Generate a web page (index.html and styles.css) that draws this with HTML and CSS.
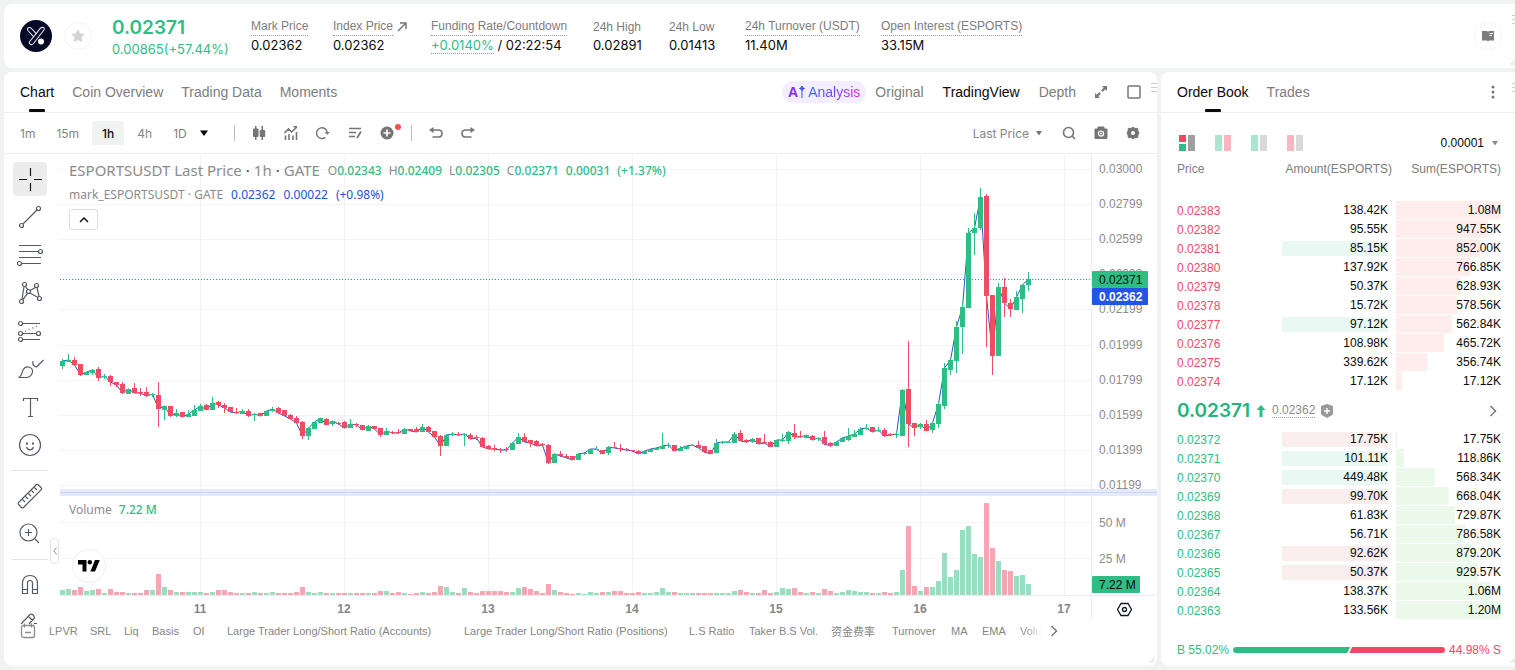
FILE: index.html
```html
<!DOCTYPE html>
<html lang="en">
<head>
<meta charset="utf-8">
<title>ESPORTSUSDT Futures</title>
<link rel="stylesheet" href="styles.css">
</head>
<body>
<header class="card ticker">
  <svg class="coin" viewBox="0 0 32 32" width="32" height="32"><circle cx="16" cy="16" r="16" fill="#050b26"/><g fill="none" stroke="#dfe3ee" stroke-width="1.1" stroke-linejoin="round"><path d="M20.5 8.2q1.200-1.200 2.800-.6t.6 2.400L13.500 23.500q-1.400 1.600-3.200.8t-.6-2.800z"/><path d="M14 17.200 7.800 10.500q-.8-1.900.5-2.700t2.700.2l5.700 6.200"/></g><circle cx="21" cy="21.500" r="3" fill="#fff"/></svg>
  <button class="round" aria-label="Favorite"><svg width="14" height="14" viewBox="0 0 14 14"><path fill="#d3d3d3" stroke="#d3d3d3" stroke-linejoin="round" d="m7 1 1.800 3.900 4.200.5-3.100 2.900.8 4.200L7 10.400l-3.700 2.100.8-4.200L1 5.400l4.200-.5z"/></svg></button>
  <div class="last"><strong>0.02371</strong><span>0.00865(+57.44%)</span></div>
  <dl class="stats">
    <div><dt><span class="hint">Mark Price</span></dt><dd>0.02362</dd></div>
    <div><dt><span class="hint">Index Price</span> <svg width="10" height="10" viewBox="0 0 10 10"><path d="M1 9 9 1M3 1h6v6" fill="none" stroke="#777" stroke-width="1.500"/></svg></dt><dd>0.02362</dd></div>
    <div><dt><span class="hint">Funding Rate/Countdown</span></dt><dd><span class="hint up">+0.0140%</span> / 02:22:54</dd></div>
    <div><dt>24h High</dt><dd>0.02891</dd></div>
    <div><dt>24h Low</dt><dd>0.01413</dd></div>
    <div><dt><span class="hint">24h Turnover (USDT)</span></dt><dd>11.40M</dd></div>
    <div><dt><span class="hint">Open Interest (ESPORTS)</span></dt><dd>33.15M</dd></div>
  </dl>
  <button class="round guide" aria-label="Guide"><svg width="14" height="12" viewBox="0 0 14 12"><path fill="#7d7d7d" d="M1 1h5l1 1 1-1h5v9.500H8l-1 1-1-1H1z"/><path d="M8.500 3.500H12M8.500 5.500H11" stroke="#fff" fill="none"/></svg></button>
  <i class="grip"></i><i class="corner"></i>
</header>

<main>
<section class="card chart-card">
  <div class="tabs">
    <nav><a class="on" href="#">Chart</a><a href="#">Coin Overview</a><a href="#">Trading Data</a><a href="#">Moments</a></nav>
    <div class="views">
      <button class="ai"><b>A<svg width="6" height="12" viewBox="0 0 6 12"><path d="M3 5v7M3 0l.8 1.700L5.500 2.500l-1.700.8L3 5l-.8-1.700L.5 2.500l1.700-.8z" fill="#4050f0" stroke="#4050f0" /></svg></b> <span>Analysis</span></button>
      <button>Original</button><button class="on">TradingView</button><button>Depth</button>
      <button aria-label="Expand"><svg width="12" height="12" viewBox="0 0 12 12"><path d="M7 0h5v5l-1.700-1.700L7.700 5.900 6.100 4.300l2.600-2.600zM5 12H0V7l1.700 1.700 2.600-2.600 1.600 1.600-2.600 2.600z" fill="#777"/></svg></button>
      <button class="box-btn" aria-label="Full screen"><svg width="14" height="14" viewBox="0 0 14 14"><rect x="1" y="1" width="12" height="12" rx="1" fill="none" stroke="#777" stroke-width="1.500"/></svg></button>
    </div>
    <i class="grip"></i>
  </div>
  <div class="tools">
    <div class="frames"><button>1m</button><button>15m</button><button class="on">1h</button><button>4h</button><button>1D</button><button class="more" aria-label="More intervals"><svg width="8" height="6" viewBox="0 0 8 6"><path d="M0 .5h8L4 6z"/></svg></button></div>
    <div class="icons">
      <button aria-label="Candles"><svg width="14" height="14" viewBox="0 0 14 14" fill="#757575"><path d="M3 0h1.500v14H3zM9.500 0H11v14H9.500z"/><rect x="1" y="2.500" width="5.500" height="8.500" rx="1"/><rect x="7.700" y="4" width="5.500" height="7" rx="1"/></svg></button>
      <button aria-label="Indicators"><svg width="14" height="14" viewBox="0 0 14 14" fill="none" stroke="#757575" stroke-width="1.600"><path d="m.5 7 4-4 3 3L13 1M9.500.8H13M1.500 9.500V14M5 8v6M9 9.500V14M12.500 6v8"/></svg></button>
      <button aria-label="Replay"><svg width="14" height="14" viewBox="0 0 15 14" fill="none" stroke="#757575" stroke-width="1.500"><path d="M10 11.700A5.800 5.800 0 1 1 12.200 7"/><path d="M9.300 6h5.500L12 9z" fill="#757575" stroke="none"/></svg></button>
      <button aria-label="Templates"><svg width="14" height="14" viewBox="0 0 14 14" fill="none" stroke="#757575" stroke-width="1.700"><path d="M1 2.500h12M1 6.500h7M1 10.500h6M13 5.500l-4 6.500"/></svg></button>
      <button class="add" aria-label="Add"><svg width="14" height="14" viewBox="0 0 14 14"><circle cx="7" cy="7" r="6.500" fill="#757575"/><path d="M7 3.500v7M3.500 7h7" stroke="#fff" stroke-width="1.700"/></svg></button>
    </div>
    <div class="icons undo">
      <button aria-label="Undo"><svg width="14" height="12" viewBox="0 0 14 12" fill="none" stroke="#757575" stroke-width="1.600"><path d="M1.500 3H10q3 .3 3 3.500T10 10H3.500"/><path d="M4.500 0v6L0 3z" fill="#757575" stroke="none"/></svg></button>
      <button aria-label="Redo"><svg width="14" height="12" viewBox="0 0 14 12" fill="none" stroke="#757575" stroke-width="1.600"><path d="M12.500 3H4Q1 3.300 1 6.500T4 10h6.500"/><path d="M9.500 0v6L14 3z" fill="#757575" stroke="none"/></svg></button>
    </div>
    <div class="icons right">
      <button class="source">Last Price <svg width="6" height="5" viewBox="0 0 6 5"><path d="M0 0h6L3 4.500z" fill="#757575"/></svg></button>
      <button aria-label="Search"><svg width="14" height="14" viewBox="0 0 14 14" fill="none" stroke="#757575" stroke-width="1.600"><circle cx="6.500" cy="6.500" r="5"/><path d="m10 10 3 3"/></svg></button>
      <button aria-label="Snapshot"><svg width="14" height="14" viewBox="0 0 14 14"><path d="M4 3V1h6v2h3v9.500H1V3z" fill="#757575" stroke="#757575" stroke-linejoin="round"/><circle cx="7" cy="7.600" r="2.600" fill="none" stroke="#fff" stroke-width="1.200"/><circle cx="7" cy="7.600" r="1" fill="#fff"/></svg></button>
      <button aria-label="Settings"><svg width="14" height="14" viewBox="0 0 14 14"><path d="m7 1 1.800 1.400 2.800 0 .4 2.800L13 7l-1 1.800-.4 2.800-2.800 0L7 13l-1.800-1.400-2.800 0L2 8.800 1 7l1-1.800.4-2.800 2.800 0z" fill="#757575" stroke="#757575" stroke-linejoin="round"/><circle cx="7" cy="7" r="2" fill="#fff"/></svg></button>
    </div>
  </div>
  <div class="stage">
    <div class="draw">
      <button class="on" aria-label="Crosshair"><svg width="28" height="28"><path d="M14.500 3v8M14.500 18v8M3 14.500h8M18 14.500h8" stroke="#131722"/></svg></button>
      <button aria-label="Trend line"><svg width="28" height="28"><circle cx="5.500" cy="22.500" r="2"/><circle cx="22.500" cy="5.500" r="2"/><path d="M7 21 21 7"/></svg></button>
      <button aria-label="Fibonacci"><svg width="28" height="28"><path d="M3 4.500h22M3 10.500h19M3 16.500h22M5 22.500h20"/><circle cx="24.500" cy="10.500" r="2"/><circle cx="3.500" cy="22.500" r="2"/></svg></button>
      <button aria-label="Patterns"><svg width="28" height="28"><circle cx="8.500" cy="5.500" r="2"/><circle cx="20.500" cy="6.500" r="2"/><circle cx="12.500" cy="12.500" r="2"/><circle cx="5.500" cy="22.500" r="2"/><circle cx="23.500" cy="19.500" r="2"/><path d="M8 7.500 6 20.500M9.500 7.500l2.300 3.200M19.500 8.500 14 11.500M21 8.500l2 9M14 14l8 4.500M11.500 14.300l-4.800 6.500"/></svg></button>
      <button aria-label="Forecast"><svg width="28" height="28"><path d="M6 6.500h18M6 16.500h15M6 22.500h18"/><path d="m9 14.500 14-6.500" stroke-dasharray="1 3"/><circle cx="4.500" cy="6.500" r="2"/><circle cx="4.500" cy="16.500" r="2"/><circle cx="22.500" cy="16.500" r="2"/><circle cx="4.500" cy="22.500" r="2"/></svg></button>
      <button aria-label="Brush"><svg width="28" height="28"><path d="M2.500 22.500q3-1 4-6.500 2-4.500 6-4 4.500 1 4 5-.800 4.500-5.500 5.500zM17 6q-1 5 3.500 6L27.500 5"/></svg></button>
      <button aria-label="Text"><svg width="28" height="28"><path d="M7.500 8V5.500h14V8M14.500 5.500v18M12 23.500h5"/></svg></button>
      <button aria-label="Emoji"><svg width="28" height="28"><circle cx="14" cy="14" r="10.500"/><path d="M10.500 16q1 2.800 3.500 2.800t3.500-2.800"/><path d="M11 11.500v2M17 11.500v2" stroke-width="2"/></svg></button>
      <hr>
      <button aria-label="Measure"><svg width="28" height="28"><path d="M2.500 20.500 20.500 2.500q1-.5 2 .5l2.500 2.500q1 1 .5 2L7.500 25.500q-1 .8-2 0l-3-3q-.8-1 0-2M6 17l3 3M9 14l3 3M12 11l3 3M15 8l3 3M18 5l3 3"/></svg></button>
      <button aria-label="Zoom in"><svg width="28" height="28"><circle cx="12.500" cy="12.500" r="8.500"/><path d="m19 19 4 4M9 12.500h7M12.500 9v7"/></svg></button>
      <hr>
      <button aria-label="Magnet"><svg width="28" height="28"><path d="M6.500 22.500V12q.5-7.500 7.500-7.500t7.500 7.500v10.500h-5V12q0-2.500-2.500-2.500T11.500 12v10.500zM6.500 18.500h5M16.500 18.500h5"/></svg></button>
      <button class="cut" aria-label="Drawing mode"><svg width="28" height="12"><path d="M5 11 14 1.500q1.500-1 3 .5t1.500 3L13 11M12.500 3.500l4 4M18 10.500h3"/></svg></button>
    </div>
    <div class="plot">
      <svg id="chart" viewBox="60 154 1097 466" role="img" aria-label="ESPORTSUSDT price and volume"></svg>
      <div class="legend">
        <p class="sym">ESPORTSUSDT Last Price <em>·</em> 1h <em>·</em> GATE <span class="ohlc"><span>O<b>0.02343</b></span><span>H<b>0.02409</b></span><span>L<b>0.02305</b></span><span>C<b>0.02371</b></span><b>0.00031</b><b>(+1.37%)</b></span></p>
        <p class="mark">mark_ESPORTSUSDT · GATE <span>0.02362</span><span>0.00022</span><span>(+0.98%)</span></p>
        <button aria-label="Collapse legend"><svg width="10" height="6" viewBox="0 0 10 6"><path d="m1 5 4-4 4 4" fill="none" stroke="#131722" stroke-width="1.500"/></svg></button>
      </div>
      <p class="vol">Volume <span>7.22 M</span></p>
      <a class="tv" href="#" aria-label="TradingView"><svg width="22" height="12" viewBox="0 0 22 12"><path d="M0 0h8.500v11.500h-4V4.500H0zM17 0h4.800L17 11.500h-4.600z"/><circle cx="11.800" cy="2.200" r="2.200"/></svg></a>
      <button class="fold" aria-label="Hide toolbar"><svg width="4" height="8" viewBox="0 0 4 8"><path d="M3.500.5.800 4l2.700 3.500" fill="none" stroke="#8a8d96"/></svg></button>
    </div>
  </div>
  <div class="indicators">
    <svg width="16" height="16" viewBox="0 0 16 16" fill="none" stroke="#8c8c8c" stroke-width="1.300"><rect x="1.500" y="2.500" width="13" height="12" rx="2"/><path d="M4.500.5v4M11.500.5v4M5 9.500h6"/></svg>
    <div class="list"><button>LPVR</button><button>SRL</button><button>Liq</button><button>Basis</button><button>OI</button><button>Large Trader Long/Short Ratio (Accounts)</button><button>Large Trader Long/Short Ratio (Positions)</button><button>L.S Ratio</button><button>Taker B.S Vol.</button><button>资金费率</button><button>Turnover</button><button>MA</button><button>EMA</button><button class="fade">Volu</button></div>
    <button aria-label="Next"><svg width="8" height="12" viewBox="0 0 8 12"><path d="m1.500 1 5 5-5 5" fill="none" stroke="#777" stroke-width="1.500"/></svg></button>
  </div>
  <i class="corner"></i>
</section>

<section class="card book">
  <div class="tabs">
    <nav><a class="on" href="#">Order Book</a><a href="#">Trades</a></nav>
    <button class="dots" aria-label="Menu"><svg width="4" height="14" viewBox="0 0 4 14" fill="#777"><circle cx="2" cy="2" r="1.500"/><circle cx="2" cy="7" r="1.500"/><circle cx="2" cy="12" r="1.500"/></svg></button>
    <i class="grip"></i>
  </div>
  <div class="modes">
    <button aria-label="Book"><svg width="16" height="16"><path fill="#f6465d" d="M0 0h7v7H0z"/><path fill="#2ebd85" d="M0 9h7v7H0z"/><path fill="#9f9f9f" d="M9 0h7v16H9z"/></svg></button>
    <button aria-label="Bids and asks"><svg width="16" height="16"><path fill="#abe5ce" d="M0 0h7v16H0z"/><path fill="#fbb5c1" d="M9 0h7v16H9z"/></svg></button>
    <button aria-label="Bids"><svg width="16" height="16"><path fill="#abe5ce" d="M0 0h7v16H0z"/><path fill="#d9d9d9" d="M9 0h7v16H9z"/></svg></button>
    <button aria-label="Asks"><svg width="16" height="16"><path fill="#fbb5c1" d="M0 0h7v16H0z"/><path fill="#d9d9d9" d="M9 0h7v16H9z"/></svg></button>
    <button class="step">0.00001 <svg width="6" height="5" viewBox="0 0 6 5"><path d="M0 0h6L3 4.500z" fill="#8a8a8a"/></svg></button>
  </div>
  <table class="asks">
    <thead><tr><th>Price</th><th>Amount(ESPORTS)</th><th>Sum(ESPORTS)</th></tr></thead>
    <tbody>
    <tr><td>0.02383</td><td><span>138.42K</span></td><td><span style="--w:100%">1.08M</span></td></tr>
    <tr><td>0.02382</td><td><span>95.55K</span></td><td><span style="--w:88%">947.55K</span></td></tr>
    <tr><td>0.02381</td><td><span class="buy">85.15K</span></td><td><span style="--w:80%">852.00K</span></td></tr>
    <tr><td>0.02380</td><td><span>137.92K</span></td><td><span style="--w:71%">766.85K</span></td></tr>
    <tr><td>0.02379</td><td><span>50.37K</span></td><td><span style="--w:61%">628.93K</span></td></tr>
    <tr><td>0.02378</td><td><span>15.72K</span></td><td><span style="--w:58%">578.56K</span></td></tr>
    <tr><td>0.02377</td><td><span class="buy">97.12K</span></td><td><span style="--w:53%">562.84K</span></td></tr>
    <tr><td>0.02376</td><td><span>108.98K</span></td><td><span style="--w:46%">465.72K</span></td></tr>
    <tr><td>0.02375</td><td><span>339.62K</span></td><td><span style="--w:30%">356.74K</span></td></tr>
    <tr><td>0.02374</td><td><span>17.12K</span></td><td><span style="--w:6%">17.12K</span></td></tr>
    </tbody>
  </table>
  <div class="mid">
    <strong>0.02371</strong>
    <svg width="10" height="12" viewBox="0 0 10 12"><path d="M5 0 9.500 5H6.500v7h-3V5H.5z" fill="#2ebd85"/></svg>
    <span class="hint">0.02362</span>
    <svg width="12" height="14" viewBox="0 0 12 14"><path d="M6 .5 11.500 2.300v8L6 13.500.5 10.300v-8z" fill="#999" stroke="#999" stroke-linejoin="round"/><path d="M6 4v6M3 7h6" stroke="#fff" stroke-width="1.500"/></svg>
    <button aria-label="More"><svg width="8" height="12" viewBox="0 0 8 12"><path d="m1.500 1 5 5-5 5" fill="none" stroke="#777" stroke-width="1.500"/></svg></button>
  </div>
  <table class="bids">
    <tbody>
    <tr><td>0.02372</td><td><span class="sell">17.75K</span></td><td><span style="--w:1%">17.75K</span></td></tr>
    <tr><td>0.02371</td><td><span class="buy">101.11K</span></td><td><span style="--w:8%">118.86K</span></td></tr>
    <tr><td>0.02370</td><td><span class="buy">449.48K</span></td><td><span style="--w:37%">568.34K</span></td></tr>
    <tr><td>0.02369</td><td><span class="sell">99.70K</span></td><td><span style="--w:50%">668.04K</span></td></tr>
    <tr><td>0.02368</td><td><span>61.83K</span></td><td><span style="--w:56%">729.87K</span></td></tr>
    <tr><td>0.02367</td><td><span>56.71K</span></td><td><span style="--w:66%">786.58K</span></td></tr>
    <tr><td>0.02366</td><td><span class="sell">92.62K</span></td><td><span style="--w:73%">879.20K</span></td></tr>
    <tr><td>0.02365</td><td><span class="sell">50.37K</span></td><td><span style="--w:78%">929.57K</span></td></tr>
    <tr><td>0.02364</td><td><span>138.37K</span></td><td><span style="--w:90%">1.06M</span></td></tr>
    <tr><td>0.02363</td><td><span>133.56K</span></td><td><span style="--w:100%">1.20M</span></td></tr>
    </tbody>
  </table>
  <div class="ratio"><span class="up">B 55.02%</span><i class="buys" style="flex-grow:55.02"></i><i class="sells" style="flex-grow:44.98"></i><span class="down">44.98% S</span></div>
  <i class="corner"></i>
</section>
</main>
<script src="chart.js"></script>
</body>
</html>
```
FILE: styles.css
```css
* { box-sizing: border-box; }
body { margin: 0; padding: 4px 0 4px 4px; min-height: 100vh; display: flex; flex-direction: column; gap: 4px; background: #f1f2f2; color: #0a0a0a; font-family: Inter, "Noto Sans CJK SC", sans-serif; font-size: 13px; overflow-x: hidden; }
button { border: 0; padding: 0; background: none; font: inherit; color: inherit; display: inline-flex; align-items: center; justify-content: center; }
a { color: inherit; text-decoration: none; }
p, dl, dd { margin: 0; }
svg { display: block; flex: none; }
.card { position: relative; background: #fff; border-radius: 8px; }
.up { color: #2ebd85; }
.down { color: #f04866; }
.hint { border-bottom: 1px dotted #999; }
.grip { position: absolute; right: 0; top: 11px; width: 6px; height: 9px; background: repeating-linear-gradient(#ccc 0 1px, transparent 1px 4px); }
.corner { position: absolute; right: 3px; bottom: 3px; border: 3px solid; border-color: transparent #eee #eee transparent; }

.ticker { display: flex; align-items: center; height: 64px; padding: 0 13px 0 16px; border-radius: 8px 0 0 8px; }
.ticker > .grip { right: 0; width: 3px; }
.ticker > .corner { right: 0; }
.round { width: 28px; height: 28px; border: 1px solid #f4f4f4; border-radius: 50%; margin-left: 12px; flex: none; }
.last { display: flex; flex-direction: column; flex: none; width: 159px; padding: 3px 0 0 20px; color: #2ebd85; line-height: 20px; white-space: nowrap; }
.last strong { font-size: 19px; line-height: 22px; font-weight: 600; }
.stats { flex: 1; display: grid; grid-template-columns: 82px 98px 162px 76px 76px 136px 1fr; white-space: nowrap; }
.stats dt { display: flex; align-items: center; gap: 4px; height: 18px; font: 12px "Liberation Sans", Arial, sans-serif; color: #7d7d7d; }
.stats dt .hint { line-height: 17px; }
.stats dd { line-height: 16px; padding-top: 1px; font-size: 13px; }
.stats dd .hint { display: inline-block; line-height: 16px; }

main { flex: 1; display: grid; grid-template-columns: minmax(0, 1fr) 354px; gap: 4px; }
.tabs { display: flex; align-items: center; height: 41px; padding: 0 16px; border-bottom: 1px solid #eee; font: 14px "Liberation Sans", Arial, sans-serif; color: #7d7d7d; }
.tabs nav { display: flex; gap: 18px; height: 100%; }
.tabs nav a { display: flex; align-items: center; position: relative; white-space: nowrap; }
.tabs .on { color: #0a0a0a; }
.tabs nav .on::after { content: ""; position: absolute; left: 50%; bottom: 0; width: 16px; height: 3px; margin-left: -8px; border-radius: 1px; background: #0a0a0a; }
.views { margin-left: auto; display: flex; gap: 19px; }
.views .ai { gap: 3px; height: 22px; margin-right: -10px; padding: 0 6px; border-radius: 11px; background: #f2edff; }
.ai b { display: flex; align-items: center; gap: 1px; font-weight: 700; color: #8a2be8; }
.ai span { background: linear-gradient(90deg, #2f6bff, #7a45ee 50%, #e61fd8); background-clip: text; color: transparent; }
.box-btn { margin-left: 1px; }

.chart-card { display: flex; flex-direction: column; }
.tools { display: flex; align-items: center; height: 41px; border-bottom: 1px solid #eee; font-size: 12px; color: #858585; }
.frames { display: flex; gap: 5px; padding-left: 8px; }
.frames button { height: 24px; padding: 0 8px; border-radius: 3px; }
.frames .on { background: #f1f3f3; color: #0a0a0a; font-weight: 500; padding: 0 10px; }
.frames .more { color: #000; padding: 0 6px 0 0; }
.icons { display: flex; align-items: center; gap: 18px; margin-left: 20px; padding-left: 17px; border-left: 1px solid #bbb; height: 16px; }
.add { position: relative; }
.add::after { content: ""; position: absolute; right: -7px; top: -2px; width: 6px; height: 6px; border-radius: 50%; background: #ef5350; }
.undo { margin-left: 17px; }
.right { margin-left: auto; padding-right: 17px; border: 0; }
.source { gap: 7px; margin-right: 2px; }

.stage { display: grid; grid-template-columns: 56px minmax(0, 1fr); }
.draw { display: flex; flex-direction: column; align-items: center; gap: 4px; height: 474px; padding: 8px 4px 0 0; overflow: hidden; }
.draw button { width: 34px; height: 34px; border-radius: 4px; flex: none; }
.draw .on { background: #ececec; }
.draw .cut { height: 14px; margin-top: 6px; }
.draw svg { fill: none; stroke: #555b66; stroke-width: 1.2; }
.draw hr { width: 36px; height: 1px; margin: 4px 0; border: 0; background: #e4e4e4; flex: none; }
.plot { position: relative; }
#chart { width: 100%; height: auto; font-family: "Liberation Sans", Arial, sans-serif; font-size: 12px; }
.legend { position: absolute; left: 9px; top: 6px; font-family: "Noto Sans", sans-serif; color: #8c8c8c; white-space: nowrap; }
.legend .sym { display: flex; align-items: center; gap: 4px; line-height: 21px; font-size: 15px; }
.legend em { color: #333; font-style: normal; }
.ohlc { display: flex; gap: 7px; margin-left: 4px; font-size: 12px; }
.ohlc b { color: #2ebd85; font-weight: 500; }
.legend .mark { display: flex; gap: 8px; line-height: 28px; font-size: 12px; }
.mark span { color: #2354d8; }
.legend button { display: flex; width: 29px; height: 21px; border: 1px solid #ddd; border-radius: 3px; background: #fff; }
.vol { position: absolute; left: 9px; top: 346px; font: 12px/20px "Noto Sans", sans-serif; color: #8c8c8c; }
.vol span { color: #2ebd85; margin-left: 4px; font-weight: 500; }
.tv { position: absolute; left: 12px; top: 395px; width: 34px; height: 34px; display: grid; place-items: center; border: 1px solid #eee; border-radius: 50%; background: #fff; }
.fold { position: absolute; left: -10px; top: 384px; width: 9px; height: 26px; border: 1px solid #e4e4e4; border-radius: 4px; background: #fff; }

.indicators { display: flex; align-items: center; height: 20px; margin-top: -7px; padding-left: 16px; font: 11px "Liberation Sans", "Noto Sans CJK SC", sans-serif; color: #858585; }
.list { display: grid; grid-template-columns: 41px 34px 28px 41px 34px 237px 225px 60px 82px 61px 59px 31px 38px 22px; justify-items: start; margin: 0 8px 0 13px; white-space: nowrap; }
.fade { background: linear-gradient(90deg, #8c8c8c 8px, #fff 22px); background-clip: text; color: transparent; }

.book { padding-bottom: 8px; border-radius: 8px 0 0 8px; display: flex; flex-direction: column; font-family: "Liberation Sans", Arial, sans-serif; font-size: 12px; }
.book .tabs .dots { margin-left: auto; }
.book .tabs { padding-right: 20px; }
.book .grip { width: 3px; }
.book .corner { right: 0; }
.modes { display: flex; gap: 20px; padding: 22px 17px 0 18px; }
.step { margin-left: auto; gap: 8px; }
.book table { table-layout: fixed; border-collapse: collapse; width: auto; margin: 0 14px 0 16px; text-align: right; }
.book th { height: 36px; padding: 0; font-weight: 400; color: #7d7d7d; }
.book thead::after { content: ""; display: block; height: 14px; }
.book th:first-child, .book td:first-child { text-align: left; }
.book th:nth-child(2), .book td:nth-child(2) { width: 111px; }
.book th:last-child, .book td:last-child { width: 109px; }
.book td { height: 19px; padding: 0; }
.asks td:first-child { color: #f04866; }
.bids td:first-child { color: #2ebd85; }
.book td span { display: block; line-height: 15px; }
.book td:nth-child(2) span { margin: 0 4px 0 1px; }
.book td:last-child span { margin: 0 0 1px 4px; line-height: 18px; background: linear-gradient(var(--bar), var(--bar)) no-repeat 0 0 / var(--w) 100%; }
.asks { --bar: #feedec; }
.bids { --bar: #eaf9e9; }
.book .buy { background: #e9f8f3; }
.book .sell { background: #f9eded; }
.mid { display: flex; align-items: center; gap: 6px; height: 39px; padding: 0 18px 0 16px; color: #8c8c8c; }
.mid strong { font: 600 19px Inter, sans-serif; color: #24b37b; }
.mid button { margin-left: auto; }
.ratio { display: flex; align-items: center; gap: 4px; margin: auto 14px 0 16px; line-height: 16px; }
.ratio i { height: 6px; }
.buys { background: #2ebd85; border-radius: 3px 0 0 3px; clip-path: polygon(0 0, 100% 0, calc(100% - 3px) 100%, 0 100%); }
.sells { background: #f04866; border-radius: 0 3px 3px 0; margin-left: -5px; clip-path: polygon(3px 0, 100% 0, 100% 100%, 0 100%); }
```
FILE: chart.js
```js
// One hourly bar per entry: direction, body top, body bottom, wick top, wick bottom, volume height.
const bars = `g 361 366 359 369 5|g 360 362 354 362 6|r 360 365 357 366 5|r 364 375 364 376 8|g 372 375 372 375 4|g 370 373 369 375 5|r 369 378 367 381 6|g 376 377 374 379 2|r 376 382 375 386 6|r 382 385 382 387 3
r 384 393 382 394 3|g 389 394 389 394 2|r 388 393 383 393 2|r 392 393 388 396 2|r 392 396 387 397 5|g 394 395 393 397 5|r 395 409 382 427 21|g 406 410 406 420 8|r 406 416 406 417 5|g 413 416 409 417 3
r 412 417 412 417 3|g 414 417 410 417 3|g 410 416 405 416 3|g 406 411 404 411 3|r 405 410 404 410 2|g 403 410 397 410 3|r 402 405 401 408 5|r 405 408 403 413 5|r 407 412 407 412 3|r 412 413 408 414 2
g 411 414 409 414 2|r 411 416 409 417 2|g 414 415 413 421 3|r 413 416 413 416 2|g 411 416 411 416 2|g 409 411 407 412 3|r 408 413 407 413 2|r 410 416 410 416 2|r 415 419 414 419 2|r 418 423 416 424 3
r 422 436 421 439 8|g 428 436 428 440 3|g 422 429 422 429 2|g 418 423 418 423 3|r 419 425 418 425 2|g 421 424 421 426 2|r 423 424 422 425 2|r 422 428 421 428 2|g 424 428 419 428 2|r 424 425 423 427 2
r 425 430 425 430 2|g 426 431 425 431 2|r 426 429 426 429 2|r 428 435 428 437 4|g 431 435 428 435 4|r 432 433 431 434 2|r 432 433 429 434 3|g 429 434 428 434 2|r 429 431 429 431 1|r 429 432 427 432 2
g 427 432 424 432 3|r 427 432 426 432 2|r 431 437 431 438 3|r 436 446 435 456 9|g 435 446 434 446 8|g 434 435 432 436 3|r 434 435 432 436 2|g 434 435 433 446 7|r 435 439 433 439 3|r 437 438 435 440 2
r 438 447 437 447 4|r 446 449 445 449 4|r 448 449 445 451 4|r 449 450 448 453 4|r 449 450 447 452 3|g 443 450 442 450 3|g 437 444 433 444 7|r 437 442 433 442 8|r 440 443 440 447 6|r 441 446 440 446 4
r 444 445 443 445 2|r 445 463 444 464 11|g 454 463 453 463 5|r 454 456 451 457 3|r 456 458 454 458 2|r 456 460 456 460 1|g 454 460 453 460 2|g 453 454 452 455 1|g 449 454 449 454 3|g 449 450 446 450 2
r 450 454 450 454 3|g 447 453 446 455 3|r 447 448 442 448 4|r 448 449 444 452 4|r 449 450 448 451 2|r 450 451 450 452 2|r 451 454 450 454 3|g 451 454 451 454 2|g 449 452 449 452 2|g 448 450 447 450 3
g 446 449 433 449 7|g 445 446 443 448 3|r 445 451 445 451 3|g 448 451 446 451 2|g 446 449 446 449 2|g 445 446 444 446 2|r 445 448 441 448 2|r 446 452 446 453 2|r 450 454 450 454 2|g 443 453 439 453 2
g 442 443 441 444 2|g 442 443 441 443 2|g 434 443 432 443 4|r 433 441 430 441 5|r 440 442 439 443 3|g 439 442 438 443 2|r 438 444 438 444 2|r 442 443 434 444 5|r 442 447 441 447 2|g 440 447 440 447 3
g 440 441 434 442 7|g 432 441 431 444 6|r 433 437 424 439 7|r 436 437 431 438 3|g 435 438 435 438 2|r 436 440 435 440 3|g 438 439 437 441 2|r 437 444 431 445 6|r 443 446 442 447 4|g 442 446 441 446 2
g 438 442 437 442 3|g 436 440 428 441 5|g 434 437 430 437 4|g 429 435 427 435 3|g 428 429 424 430 3|r 427 432 427 432 2|g 430 431 427 432 2|r 430 436 428 437 3|r 434 435 433 436 2|g 434 435 432 438 3
g 390 436 389 436 25|r 389 424 341 447 69|r 423 428 423 436 9|g 424 427 423 429 4|r 424 431 420 431 8|g 423 430 422 433 8|g 404 424 402 428 14|g 368 406 363 409 42|g 360 370 358 375 18|g 327 361 321 373 25
g 307 327 303 354 65|g 233 308 228 308 69|g 228 233 213 255 41|g 197 228 188 230 38|r 196 296 194 347 92|r 295 356 295 375 47|g 287 356 283 356 34|r 287 303 278 317 25|r 303 309 299 317 24|g 297 310 291 310 19
g 285 299 284 313 20|g 279 285 272 291 11`
  .split(/[|\n]/)
  .map((row) => {
    const [dir, top, bottom, high, low, volume] = row.trim().split(" ");
    return { up: dir === "g", top: +top, bottom: +bottom, high: +high, low: +low, volume: +volume };
  });

const GREEN = "#2ebd85";
const RED = "#f04c65";
const rect = (x, y, w, h, fill, extra = "") => `<rect x="${x}" y="${y}" width="${w}" height="${h}" fill="${fill}" ${extra}/>`;
const text = (x, y, value, fill = "#8c8c8c", extra = "") => `<text x="${x}" y="${y}" fill="${fill}" ${extra}>${value}</text>`;

const days = [11, 12, 13, 14, 15, 16, 17];
const prices = ["0.03000", "0.02799", "0.02599", "0.02399", "0.02199", "0.01999", "0.01799", "0.01599", "0.01399", "0.01199"];
const priceY = (i) => Math.round(169 + i * 35.1);
let out = "";

days.forEach((day, i) => {
  out += rect(200 + i * 144, 154, 1, 441, "#f3f3f3");
  out += text(200 + i * 144, 613, day, "#858585", 'text-anchor="middle" font-weight="bold"');
});
prices.forEach((price, i) => {
  out += rect(60, priceY(i), 1031, 1, "#f4f4f4");
  out += text(1099, priceY(i) + 4, price);
});
[[522, "50 M"], [558, "25 M"]].forEach(([y, label]) => {
  out += rect(60, y, 1031, 1, "#f4f4f4") + text(1099, y + 5, label);
});
out += rect(1091, 154, 1, 466, "#ededed") + rect(60, 595, 1097, 1, "#ededed");
out += rect(60, 489, 1097, 7, "#dfe5fb", 'opacity=".85"') + rect(60, 492, 1097, 1, "#cdd5ef");

const line = bars.map((b, i) => `${62.5 + i * 6},${b.up ? b.top : b.bottom}`).join(" ");
out += `<polyline points="${line}" fill="none" stroke="#2c54d0" stroke-width="1"/>`;
bars.forEach((b, i) => {
  const x = 60 + i * 6;
  const color = b.up ? GREEN : RED;
  out += rect(x, 595 - b.volume, 5, b.volume, b.up ? "#98dfc2" : "#f7a5b2");
  out += rect(x + 2, b.high, 1, b.low - b.high, color);
  out += rect(x, b.top, 5, b.bottom - b.top, color);
});

out += `<path d="M60 279.500H1091" stroke="#26a69a" stroke-dasharray="1 2"/>`;
out += rect(1092, 271, 56, 17, GREEN, 'rx="1"') + text(1099, 284, "0.02371", "#0a0a0a");
out += rect(1092, 288, 56, 17, "#2354e6", 'rx="1"') + text(1099, 301, "0.02362", "#fff", 'font-weight="bold"');
out += rect(1092, 576, 48, 17, GREEN, 'rx="1"') + text(1099, 589, "7.22 M", "#0a0a0a");
out += `<path d="M1121 603.500h7l3.500 6-3.500 6h-7l-3.500-6z" fill="none" stroke="#131722" stroke-width="1.300"/><circle cx="1124.500" cy="609.500" r="2" fill="none" stroke="#131722" stroke-width="1.300"/>`;

document.getElementById("chart").innerHTML = out;
```
